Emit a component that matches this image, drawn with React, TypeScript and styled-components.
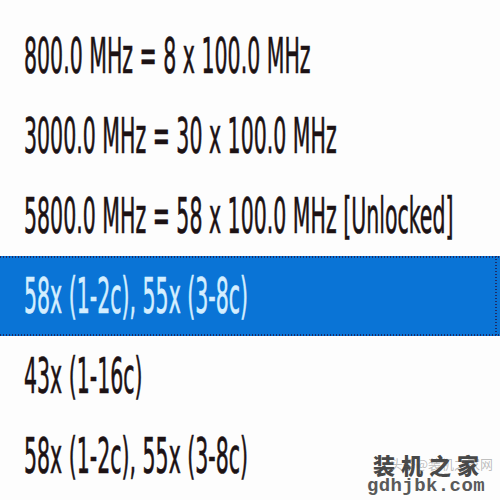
import React from "react";
import styled, { createGlobalStyle } from "styled-components";

const GlobalStyle = createGlobalStyle`
  html, body {
    margin: 0;
    padding: 0;
    background: #fdfdfd;
  }
`;

const rows = [
  { label: "800.0 MHz = 8 x 100.0 MHz" },
  { label: "3000.0 MHz = 30 x 100.0 MHz" },
  { label: "5800.0 MHz = 58 x 100.0 MHz [Unlocked]" },
  { label: "58x (1-2c), 55x (3-8c)", selected: true },
  { label: "43x (1-16c)" },
  { label: "58x (1-2c), 55x (3-8c)" },
];

const Page = styled.div`
  position: relative;
  width: 500px;
  height: 500px;
  overflow: hidden;
  background: #fdfdfd;
`;

const List = styled.ul`
  list-style: none;
  margin: 0;
  padding: 16px 0 0;
`;

const dots = "repeating-linear-gradient(90deg, #1d2c66 0 1.5px, transparent 1.5px 3px)";
const vdots = "repeating-linear-gradient(180deg, #1d2c66 0 1.5px, transparent 1.5px 3px)";

const Row = styled.li<{ $selected?: boolean }>`
  height: 80px;
  display: flex;
  align-items: center;
  padding-left: 24px;
  box-sizing: border-box;
  color: ${(p) => (p.$selected ? "#d4eeff" : "#1c1214")};
  background: ${(p) =>
    p.$selected
      ? `${dots} top left / 100% 2px no-repeat,
         ${dots} bottom left / 100% 2px no-repeat,
         ${vdots} right 3px top / 2px 100% no-repeat,
         #0a74d6`
      : "transparent"};
`;

const Label = styled.span`
  display: inline-block;
  font-family: "DejaVu Sans Condensed", "DejaVu Sans", sans-serif;
  font-stretch: condensed;
  font-size: 22.8px;
  line-height: 1;
  white-space: nowrap;
  -webkit-text-stroke: 0.3px currentColor;
  transform: scaleY(2.15);
  transform-origin: left center;
`;

const Watermark = styled.div`
  position: absolute;
  right: 15px;
  bottom: 4px;
  display: flex;
  flex-direction: column;
  align-items: center;
`;

const Brand = styled.div`
  font-family: "Noto Sans CJK SC", sans-serif;
  font-weight: 900;
  font-size: 22px;
  letter-spacing: 6px;
  margin-right: -6px;
  color: #484848;
  line-height: 1.15;
`;

const Domain = styled.div`
  font-family: "Liberation Mono", monospace;
  font-weight: bold;
  font-size: 19px;
  letter-spacing: 0.4px;
  color: #5a5a5a;
  line-height: 1;
`;

// faint platform stamp laid over the brand mark
const Stamp = styled.div`
  position: absolute;
  right: 7px;
  bottom: 30px;
  font-family: "Noto Sans CJK SC", sans-serif;
  font-size: 13px;
  line-height: 1;
  color: rgba(90, 90, 90, 0.4);
  white-space: nowrap;
`;

export default function App() {
  return (
    <Page>
      <GlobalStyle />
      <List>
        {rows.map((r, i) => (
          <Row key={i} $selected={r.selected}>
            <Label>{r.label}</Label>
          </Row>
        ))}
      </List>
      <Watermark>
        <Brand>装机之家</Brand>
        <Domain>gdhjbk.com</Domain>
      </Watermark>
      <Stamp>头条@装机之家网</Stamp>
    </Page>
  );
}
